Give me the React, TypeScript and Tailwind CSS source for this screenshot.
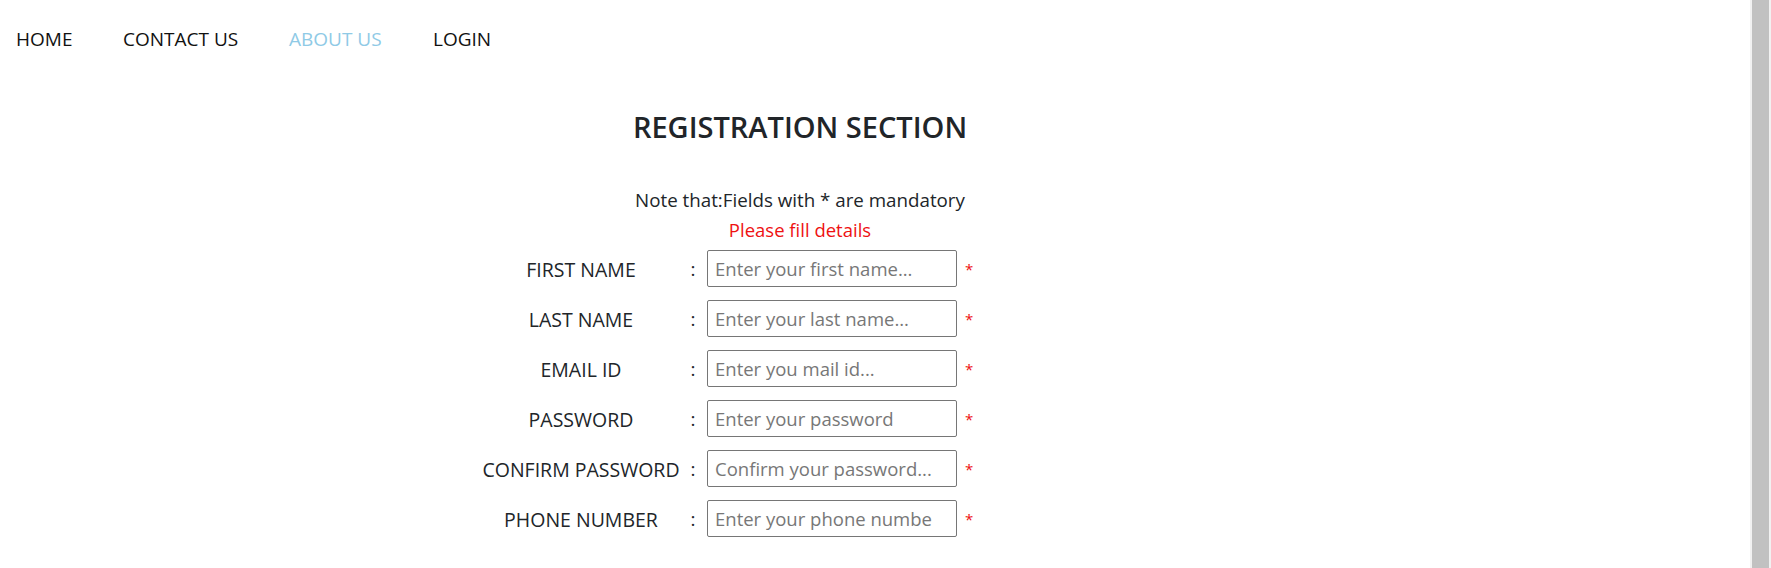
import React from "react";

const font = { fontFamily: '"Open Sans", "Noto Sans", Arial, sans-serif' };

const fields = [
  { label: "FIRST NAME", placeholder: "Enter your first name..." },
  { label: "LAST NAME", placeholder: "Enter your last name..." },
  { label: "EMAIL ID", placeholder: "Enter you mail id..." },
  { label: "PASSWORD", placeholder: "Enter your password" },
  { label: "CONFIRM PASSWORD", placeholder: "Confirm your password..." },
  { label: "PHONE NUMBER", placeholder: "Enter your phone numbe" },
];

export default function App() {
  return (
    <div className="flex h-[568px] w-full overflow-hidden bg-white" style={font}>
      <div className="flex-1">
        <nav className="flex pl-[16px] pt-[25px] text-[19px] leading-[28px] text-[#111]">
          <a className="w-[107px]">HOME</a>
          <a className="w-[166px]">CONTACT US</a>
          <a className="w-[144px] text-[#8fcae6]">ABOUT US</a>
          <a>LOGIN</a>
        </nav>

        <div className="w-[1600px] mt-[54px] flex flex-col items-center text-[#212529]">
          <h2 className="text-[29px] leading-[40px] font-semibold">REGISTRATION SECTION</h2>
          <p className="mt-[39px] text-[18.75px] leading-[27px]">Note that:Fields with * are mandatory</p>
          <p className="mt-[3px] text-[18.5px] leading-[27px] text-[#ee1111]">Please fill details</p>
        </div>

        <form className="ml-[478px] mt-[7px] flex flex-col gap-[13px] text-[#212529]">
          {fields.map((f) => (
            <div key={f.label} className="flex items-start h-[37px]">
              <label className="w-[206px] h-[37px] pt-[2px] flex items-center justify-center text-[19.5px] leading-[27px] whitespace-nowrap">
                {f.label}
              </label>
              <span className="w-[18px] h-[37px] pt-[2px] flex items-center justify-center text-[19px] leading-[27px]">:</span>
              <input
                type="text"
                placeholder={f.placeholder}
                className="ml-[5px] w-[250px] h-[37px] border border-[#767676] rounded-[2px] px-[7px] text-[18.5px] text-[#212529] placeholder:text-[#777] outline-none"
                style={font}
              />
              <span className="ml-[8px] mt-[12px] text-[15px] leading-[14px] text-[#ee1111]">*</span>
            </div>
          ))}
        </form>
      </div>
      <div className="w-[21px] h-full bg-[#f1f1f1] px-[2px]">
        <div className="h-full w-full bg-[#c1c1c1]" />
      </div>
    </div>
  );
}
